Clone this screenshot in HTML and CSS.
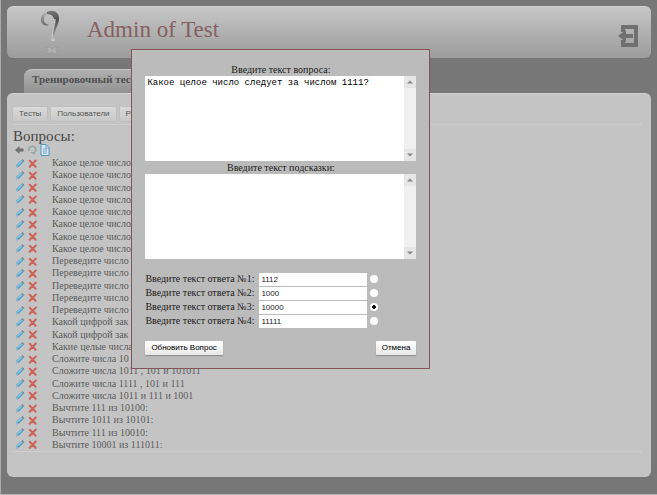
FILE: index.html
```html
<!DOCTYPE html>
<html lang="ru">
<head>
<meta charset="utf-8">
<title>Admin of Test</title>
<link rel="stylesheet" href="styles.css">
</head>
<body>
<svg class="defs" aria-hidden="true">
  <defs>
    <linearGradient id="metal" x1="0" y1="0" x2="0" y2="1">
      <stop offset="0" stop-color="#777"/><stop offset=".3" stop-color="#4e4e4e"/><stop offset=".6" stop-color="#777"/><stop offset="1" stop-color="#ccc"/>
    </linearGradient>
    <linearGradient id="hook" x1="0" y1="0" x2="0" y2="1">
      <stop offset="0" stop-color="#b4b4b4"/><stop offset="1" stop-color="#6a6a6a"/>
    </linearGradient>
    <symbol id="pencil" viewBox="0 0 11 11">
      <path d="M2 9.500 2.500 6.500 7.500 2 9.500 4 4.500 9z" fill="#4f9fc9"/>
      <path d="M3.500 7 8 3" stroke="#8cc8e4" stroke-width="1.200"/>
      <path d="M2 9.500 2.500 6.500 4.500 9z" fill="#a4bccb"/>
      <path d="M7.500 2 8.500 1 10.500 3 9.500 4z" fill="#7d8a92"/>
    </symbol>
    <symbol id="cross" viewBox="0 0 10 10">
      <path d="M2.500 2.500 7.800 8M8 2.300 2.500 8" stroke="#cb6558" stroke-width="1.900" stroke-linecap="round"/>
    </symbol>
  </defs>
</svg>
<header class="header">
  <svg class="logo" viewBox="0 0 24 48" aria-hidden="true">
    <path d="M11 16C6 18 2 14 3 9 4 4 9 2 14 3c-5 1-8 4-8 7 0 4 2 5 5 6z" fill="url(#hook)"/>
    <path d="M9 3c6-3 12 0 12 6 0 6-3 9-4 15v8h-4c-1-8 2-12 3-18 1-5-1-9-7-9z" fill="url(#metal)"/>
    <path d="M17 10c0 6-3 9-3 18" stroke="#c4c4c4" stroke-width="1.500" fill="none"/>
    <path d="M8 38h4l2 2 3-2h3l-2 3 2 4h-4l-2-2-3 2-3-1 2-3z" fill="#b0b0b0" stroke="#989898" stroke-width=".8"/>
  </svg>
  <h1 class="title">Admin of Test</h1>
  <a class="exit" href="#" aria-label="Выход">
    <svg viewBox="0 0 21 22"><path d="M5 7V2h13v18H5v-5" fill="none" stroke="#707070" stroke-width="4"/><path d="M0 11 8 5v4h7v4H8v4z" fill="#707070"/></svg>
  </a>
</header>
<div class="tab">Тренировочный тест</div>
<main class="panel">
  <nav class="nav">
    <button type="button">Тесты</button>
    <button type="button">Пользователи</button>
    <button type="button">Результаты</button>
  </nav>
  <h2 class="heading">Вопросы:</h2>
  <div class="tools">
    <a href="#" aria-label="Назад"><svg viewBox="0 0 12 12"><path d="M2 6 6.500 2v2.500h4v3h-4V10z" fill="#707070"/></svg></a>
    <a href="#" aria-label="Обновить"><svg viewBox="0 0 12 12"><path d="M3 7A3.500 3.500 0 1 1 9 8" fill="none" stroke="#94aaa2" stroke-width="1.800"/><path d="M4 8h5v3z" fill="#94aaa2"/></svg></a>
    <a href="#" aria-label="Добавить"><svg viewBox="0 0 12 12"><path d="M2 .5h5l3 3v8H2z" fill="#d8e6ef" stroke="#5596bc"/><path d="M4 5h4M4 7h4M4 9h4M7 1v3h3" stroke="#6aa5c8" fill="none"/></svg></a>
  </div>
  <ul class="list" id="list"></ul>
</main>
<div class="base"></div>
<form class="dialog" role="dialog" aria-label="Вопрос">
  <label class="caption" for="question">Введите текст вопроса:</label>
  <div class="area">
    <textarea id="question">Какое целое число следует за числом 1111?</textarea>
    <div class="scroll" aria-hidden="true"><svg viewBox="0 0 12 12"><path d="M3 7.500 6 4.500l3 3z"/></svg><svg viewBox="0 0 12 12"><path d="M3 4.500 6 7.500l3-3z"/></svg></div>
  </div>
  <label class="caption" for="hint">Введите текст подсказки:</label>
  <div class="area">
    <textarea id="hint"></textarea>
    <div class="scroll" aria-hidden="true"><svg viewBox="0 0 12 12"><path d="M3 7.500 6 4.500l3 3z"/></svg><svg viewBox="0 0 12 12"><path d="M3 4.500 6 7.500l3-3z"/></svg></div>
  </div>
  <div class="answers">
    <label for="a1">Введите текст ответа №1:</label><input type="text" id="a1" value="1112"><input type="radio" name="right" aria-label="№1">
    <label for="a2">Введите текст ответа №2:</label><input type="text" id="a2" value="1000"><input type="radio" name="right" aria-label="№2">
    <label for="a3">Введите текст ответа №3:</label><input type="text" id="a3" value="10000"><input type="radio" name="right" aria-label="№3" checked>
    <label for="a4">Введите текст ответа №4:</label><input type="text" id="a4" value="11111"><input type="radio" name="right" aria-label="№4">
  </div>
  <div class="actions">
    <button type="button">Обновить Вопрос</button>
    <button type="button">Отмена</button>
  </div>
</form>
<script src="list.js"></script>
</body>
</html>
```
FILE: styles.css
```css
* { box-sizing: border-box; }
body {
  margin: 0;
  min-height: 100vh;
  display: flex;
  flex-direction: column;
  padding: 6px 6px 0;
  background: #777;
  border-left: 1px solid #aaa;
  border-bottom: 1px solid #b4b4b4;
  font-family: "Liberation Serif", serif;
  font-size: 10px;
  color: #5c5c5c;
}
.defs { position: absolute; width: 0; height: 0; }
.header {
  display: flex;
  align-items: center;
  height: 52px;
  padding: 0 12px 0 31px;
  border-radius: 6px;
  border-top: 1px solid #d2d2d2;
  background: linear-gradient(#c6c6c6, #9c9c9c);
}
.logo { width: 24px; height: 48px; }
.title {
  flex: 1;
  margin: 0 0 6px 25px;
  font-size: 23px;
  line-height: 28px;
  font-weight: normal;
  color: #866064;
}
.exit { margin-top: 6px; }
.exit svg { display: block; width: 21px; height: 22px; }
.tab {
  align-self: flex-start;
  margin: 11px 0 0 17px;
  padding: 0 12px 0 8px;
  border-radius: 8px 8px 0 0;
  border-top: 1px solid #c4c4c4;
  background: linear-gradient(#b0b0b0, #929292);
  font-size: 11px;
  line-height: 18px;
  height: 24px;
  font-weight: bold;
  color: #505050;
}
.panel {
  flex: 1;
  display: flex;
  flex-direction: column;
  padding: 13px 9px 25px 6px;
  border-radius: 6px;
  border-top: 1px solid #d2d2d2;
  background: #c4c4c4;
}
.base { height: 17px; }
.nav {
  display: flex;
  gap: 4px;
  padding-bottom: 3px;
  border-bottom: 1px solid #cecece;
}
.nav button {
  height: 14px;
  padding: 0 6px;
  border: 0;
  border-radius: 1px;
  background: linear-gradient(#dadada, #c8c8c8);
  box-shadow: 0 0 1px #999;
  font: 8px/14px "Liberation Sans", sans-serif;
  color: #555;
}
.heading {
  margin: 3px 0 0;
  font-size: 15px;
  line-height: 16px;
  font-weight: normal;
  color: #484848;
}
.tools { display: flex; gap: 1px; height: 13px; }
.tools svg { display: block; width: 12px; height: 12px; }
.list {
  flex: 1;
  display: flex;
  flex-direction: column;
  justify-content: space-between;
  margin: 0;
  padding: 0;
  list-style: none;
  border-bottom: 1px solid #cecece;
}
.list li {
  display: flex;
  align-items: center;
  line-height: 12px;
}
.list a { display: flex; }
.list svg { width: 11px; height: 11px; margin: 0 1px; }
.list span { margin-left: 13px; white-space: nowrap; }
.dialog {
  position: absolute;
  left: 20%;
  top: 49px;
  width: 299px;
  padding: 13px;
  display: flex;
  flex-direction: column;
  background: #bbb;
  border: 1px solid #84545c;
  color: #1c1c1c;
}
.caption { line-height: 13px; text-align: center; }
.area { display: flex; height: 85px; background: #fff; }
.area textarea {
  flex: 1;
  min-width: 0;
  resize: none;
  border: 0;
  padding: 1px 2px;
  outline: 0;
  background: #fff;
  font: 9px/12px "Liberation Mono", monospace;
  color: #000;
}
.scroll {
  width: 12px;
  display: flex;
  flex-direction: column;
  justify-content: space-between;
  background: #f0f0f0;
}
.scroll svg { width: 12px; height: 12px; fill: #888; background: #e6e6e6; }
.answers {
  display: grid;
  grid-template-columns: 113px 108px 13px;
  column-gap: 1px;
  align-items: center;
  margin-top: 13px;
  line-height: 14px;
}
.answers label { white-space: nowrap; }
.answers input[type="text"] {
  width: 100%;
  height: 13px;
  padding: 0 2px;
  border: 0;
  background: #fff;
  font: 8px "Liberation Sans", sans-serif;
  color: #222;
}
.answers input[type="radio"] {
  appearance: none;
  width: 8px;
  height: 8px;
  margin: 0 2px;
  border-radius: 50%;
  background: #fff;
}
.answers input[type="radio"]:checked { background: radial-gradient(circle, #111 2px, #fff 2px); }
.actions { display: flex; justify-content: space-between; margin-top: 13px; }
.actions button {
  height: 14px;
  padding: 0 6px;
  border: 0;
  border-radius: 1px;
  background: linear-gradient(#fff, #e8e8e8);
  box-shadow: 0 1px 1px #888;
  font: 8px/14px "Liberation Sans", sans-serif;
  color: #000;
}
```
FILE: list.js
```js
const questions = [
  ...Array(8).fill("Какое целое число"),
  ...Array(5).fill("Переведите число"),
  "Какой цифрой зак",
  "Какой цифрой зак",
  "Какие целые числа",
  "Сложите числа 10",
  "Сложите числа 1011 , 101 и 101011",
  "Сложите числа 1111 , 101 и 111",
  "Сложите числа 1011 и 111 и 1001",
  "Вычтите 111 из 10100:",
  "Вычтите 1011 из 10101:",
  "Вычтите 111 из 10010:",
  "Вычтите 10001 из 111011:"
];
document.getElementById("list").innerHTML = questions.map(q => `<li>
  <a href="#" aria-label="Изменить"><svg><use href="#pencil"/></svg></a>
  <a href="#" aria-label="Удалить"><svg><use href="#cross"/></svg></a>
  <span>${q}</span></li>`).join("");
```
